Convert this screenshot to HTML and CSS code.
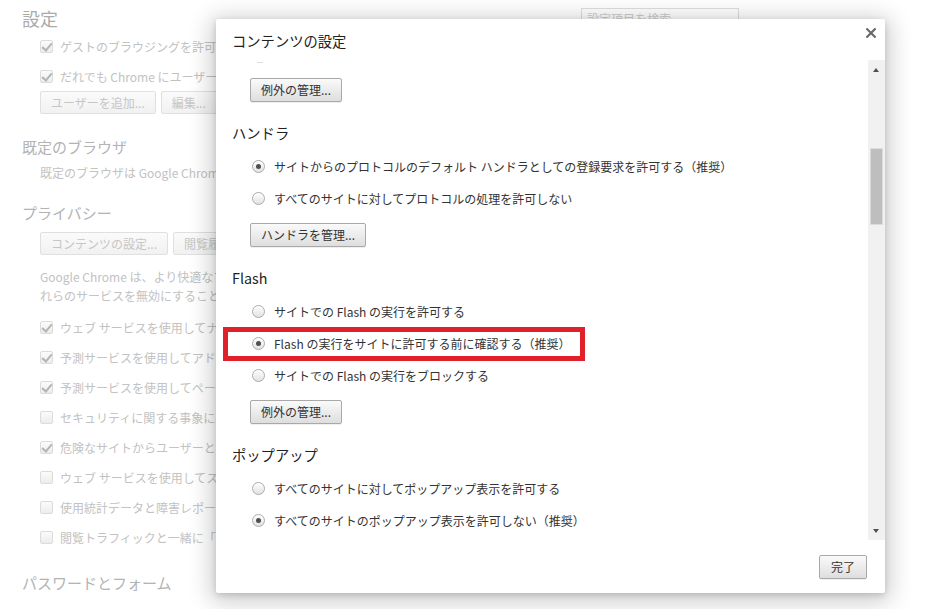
FILE: index.html
```html
<!DOCTYPE html>
<html lang="ja">
<head>
<meta charset="utf-8">
<title>設定 - コンテンツの設定</title>
<link rel="stylesheet" href="styles.css">
</head>
<body>
<div class="page">
  <header class="page-header">
    <h1 class="page-title">設定</h1>
    <div class="search">設定項目を検索</div>
  </header>

  <section class="bg-users">
    <div class="bg-check"><span class="cb checked"></span>ゲストのブラウジングを許可</div>
    <div class="bg-check"><span class="cb checked"></span>だれでも Chrome にユーザーを追加できるようにする</div>
    <div class="bg-buttons">
      <span class="bg-btn">ユーザーを追加...</span>
      <span class="bg-btn">編集...</span>
      <span class="bg-btn">削除...</span>
      <span class="bg-btn">インポート...</span>
    </div>
  </section>

  <h2 class="bg-heading h-browser">既定のブラウザ</h2>
  <p class="bg-text">既定のブラウザは Google Chrome です。</p>

  <h2 class="bg-heading h-privacy">プライバシー</h2>
  <div class="bg-buttons privacy-buttons">
    <span class="bg-btn">コンテンツの設定...</span>
    <span class="bg-btn">閲覧履歴データの消去...</span>
  </div>
  <p class="bg-para">
    <span class="line">Google Chrome は、より快適なブラウジングを提供するためにウェブ サービスを使用することがあります。こ</span>
    <span class="line">れらのサービスを無効にすることもできます。</span>
  </p>
  <div class="bg-checks">
    <div class="bg-check"><span class="cb checked"></span>ウェブ サービスを使用してナビゲーション エラーの解決を助ける</div>
    <div class="bg-check"><span class="cb checked"></span>予測サービスを使用してアドレスバーに入力された検索と URL を補完する</div>
    <div class="bg-check"><span class="cb checked"></span>予測サービスを使用してページをより迅速に読み込む</div>
    <div class="bg-check"><span class="cb"></span>セキュリティに関する事象に関する詳細情報を Google に自動送信する</div>
    <div class="bg-check"><span class="cb checked"></span>危険なサイトからユーザーとデバイスを保護する</div>
    <div class="bg-check"><span class="cb"></span>ウェブ サービスを使用してスペルミスの解決を助ける</div>
    <div class="bg-check"><span class="cb"></span>使用統計データと障害レポートを Google に自動送信する</div>
    <div class="bg-check"><span class="cb"></span>閲覧トラフィックと一緒に「トラッキング拒否」リクエストを送信する</div>
  </div>

  <h2 class="bg-heading h-password">パスワードとフォーム</h2>
</div>

<div class="dialog">
  <div class="dlg-head">
    <h2 class="dlg-title">コンテンツの設定</h2>
    <span class="close" aria-label="閉じる">
      <svg width="10" height="10" viewBox="0 0 10 10"><path d="M1.2 1.2 L8.8 8.8 M8.8 1.2 L1.2 8.8" stroke="#6a6a6a" stroke-width="2.2" stroke-linecap="square" fill="none"/></svg>
    </span>
  </div>

  <div class="dlg-body">
    <div class="dlg-scroll">
      <div class="cut"></div>
      <span class="btn first-btn">例外の管理...</span>

      <section class="opt">
        <h3 class="opt-title">ハンドラ</h3>
        <div class="radios">
          <div class="radio-row"><span class="radio checked"></span>サイトからのプロトコルのデフォルト ハンドラとしての登録要求を許可する（推奨）</div>
          <div class="radio-row"><span class="radio"></span>すべてのサイトに対してプロトコルの処理を許可しない</div>
        </div>
        <span class="btn">ハンドラを管理...</span>
      </section>

      <section class="opt">
        <h3 class="opt-title">Flash</h3>
        <div class="radios">
          <div class="radio-row"><span class="radio"></span>サイトでの Flash の実行を許可する</div>
          <div class="radio-row marked"><span class="radio checked"></span>Flash の実行をサイトに許可する前に確認する（推奨）<span class="highlight"></span></div>
          <div class="radio-row"><span class="radio"></span>サイトでの Flash の実行をブロックする</div>
        </div>
        <span class="btn">例外の管理...</span>
      </section>

      <section class="opt">
        <h3 class="opt-title">ポップアップ</h3>
        <div class="radios">
          <div class="radio-row"><span class="radio"></span>すべてのサイトに対してポップアップ表示を許可する</div>
          <div class="radio-row"><span class="radio checked"></span>すべてのサイトのポップアップ表示を許可しない（推奨）</div>
        </div>
      </section>
    </div>

    <div class="scrollbar">
      <span class="arrow up"></span>
      <span class="thumb"></span>
      <span class="arrow down"></span>
    </div>
  </div>

  <div class="dlg-foot">
    <span class="btn done">完了</span>
  </div>
</div>
</body>
</html>
```

FILE: styles.css
```css
* { box-sizing: border-box; }

html, body {
  margin: 0;
  padding: 0;
  width: 934px;
  height: 609px;
  overflow: hidden;
  background: #ffffff;
}

body {
  position: relative;
  font-family: "Noto Sans CJK JP", "Noto Sans", sans-serif;
  font-size: 12px;
  color: #333;
}

/* ---------- background settings page (faded) ---------- */
.page {
  width: 739px;
  padding-left: 22px;
  color: #bdbdbd;
}

.page-header {
  display: flex;
  justify-content: space-between;
  align-items: flex-start;
  height: 30px;
}

.page-title {
  margin: 6px 0 0;
  font-size: 18px;
  font-weight: normal;
  line-height: 24px;
  color: #ababab;
}

.search {
  margin-top: 8px;
  width: 158px;
  height: 22px;
  border: 1px solid #dedede;
  padding-left: 5px;
  line-height: 20px;
  font-size: 12px;
  color: #cdcdcd;
  background: #fff;
  overflow: hidden;
}

.bg-users { padding-top: 1px; }

/* items under the dialog are clipped where the dialog begins */
.bg-check,
.bg-buttons,
.bg-text,
.bg-para {
  width: 194px;
  overflow: hidden;
}

.bg-check {
  display: flex;
  align-items: center;
  height: 30px;
  padding-left: 18px;
  white-space: nowrap;
  font-size: 12px;
  color: #c2c2c2;
}

.cb {
  position: relative;
  flex: none;
  width: 13px;
  height: 13px;
  margin-right: 7px;
  border: 1px solid #dcdcdc;
  border-radius: 2px;
  background: linear-gradient(#fbfbfb, #ededed);
}

.cb.checked::after {
  content: "";
  position: absolute;
  left: 3px;
  top: 0;
  width: 4px;
  height: 8px;
  border-right: 2px solid #b4b4b4;
  border-bottom: 2px solid #b4b4b4;
  transform: rotate(40deg);
}

.bg-buttons {
  display: flex;
  gap: 5px;
  padding-left: 18px;
  white-space: nowrap;
}

.bg-btn {
  flex: none;
  height: 23px;
  padding: 0 10px;
  border: 1px solid #e0e0e0;
  border-radius: 2px;
  background: linear-gradient(#fbfbfb, #f1f1f1);
  line-height: 21px;
  font-size: 12px;
  color: #c6c6c6;
}

.bg-heading {
  margin: 0;
  font-size: 15px;
  font-weight: normal;
  line-height: 20px;
  color: #b3b3b3;
  white-space: nowrap;
}

.h-browser { margin-top: 23px; }
.h-privacy { margin-top: 20px; }
.h-password { margin-top: 21px; }

.bg-text {
  margin: 6px 0 0;
  padding-left: 18px;
  line-height: 20px;
  color: #c2c2c2;
  white-space: nowrap;
}

.privacy-buttons { margin-top: 9px; }

.bg-para {
  margin: 12px 0 0;
  padding-left: 18px;
  line-height: 19px;
  color: #c2c2c2;
}

.bg-para .line {
  display: block;
  white-space: nowrap;
}

.bg-checks { margin-top: 7px; }

/* ---------- dialog ---------- */
.dialog {
  position: absolute;
  left: 216px;
  top: 19px;
  width: 669px;
  height: 574px;
  display: flex;
  flex-direction: column;
  background: #fff;
  border-radius: 2px;
  box-shadow: 0 4px 23px 5px rgba(0, 0, 0, 0.2), 0 2px 6px rgba(0, 0, 0, 0.15);
}

.dlg-head {
  display: flex;
  justify-content: space-between;
  align-items: flex-start;
  height: 41px;
  padding: 0 9px 0 16px;
  flex: none;
}

.dlg-title {
  margin: 12px 0 0;
  font-size: 14.3px;
  font-weight: normal;
  line-height: 20px;
  color: #222;
}

.close {
  display: block;
  margin-top: 9px;
  width: 10px;
  height: 10px;
}

.close svg { display: block; }

.dlg-body {
  display: flex;
  height: 480px;
  flex: none;
}

.dlg-scroll {
  flex: 1;
  overflow: hidden;
  padding-left: 16px;
}

.cut {
  width: 6px;
  height: 1px;
  margin: 2px 0 0 25px;
  background: #dedede;
}

.btn {
  display: inline-block;
  height: 24px;
  padding: 0 10px;
  border: 1px solid #a9a9a9;
  border-radius: 2px;
  background: linear-gradient(#fafafa, #dedede);
  box-shadow: 0 1px 0 rgba(0, 0, 0, 0.06);
  line-height: 22px;
  font-size: 12px;
  color: #333;
  white-space: nowrap;
  margin-left: 18px;
}

.first-btn { margin-top: 15px; }

.opt { display: block; }

.opt-title {
  margin: 21px 0 0;
  font-size: 14.3px;
  font-weight: normal;
  line-height: 20px;
  color: #222;
}

.radios {
  padding-top: 7px;
  padding-left: 20px;
}

.radio-row {
  position: relative;
  display: flex;
  align-items: center;
  height: 32px;
  white-space: nowrap;
  font-size: 12px;
  color: #333;
}

.radio {
  flex: none;
  display: flex;
  align-items: center;
  justify-content: center;
  width: 13px;
  height: 13px;
  margin-right: 9px;
  border: 1px solid #ababab;
  border-radius: 50%;
  background: linear-gradient(#fefefe, #e2e2e2);
  box-shadow: inset 0 1px 1px #fff;
}

.radio.checked::after {
  content: "";
  width: 5px;
  height: 5px;
  border-radius: 50%;
  background: #4f4f4f;
}

.opt .btn { margin-top: 9px; }

/* red annotation box */
.highlight {
  position: absolute;
  left: -29px;
  top: 0;
  width: 362px;
  height: 34px;
  border: 5px solid #e0202a;
}

/* scrollbar */
.scrollbar {
  flex: none;
  width: 17px;
  display: flex;
  flex-direction: column;
  background: #f1f1f1;
}

.arrow {
  flex: none;
  width: 0;
  height: 0;
  margin-left: 5px;
  border-left: 3.5px solid transparent;
  border-right: 3.5px solid transparent;
}

.arrow.up {
  margin-top: 8px;
  border-bottom: 4px solid #505050;
}

.thumb {
  flex: none;
  width: 13px;
  height: 77px;
  margin: 76px 0 0 2px;
  background: #bebebe;
  border: 1px solid #dcdcdc;
}

.arrow.down {
  margin-top: auto;
  margin-bottom: 7px;
  border-top: 4px solid #505050;
}

.dlg-foot {
  display: flex;
  justify-content: flex-end;
  padding: 15px 18px 0 0;
  flex: 1;
}

.btn.done {
  min-width: 48px;
  text-align: center;
  margin-left: 0;
}
```
